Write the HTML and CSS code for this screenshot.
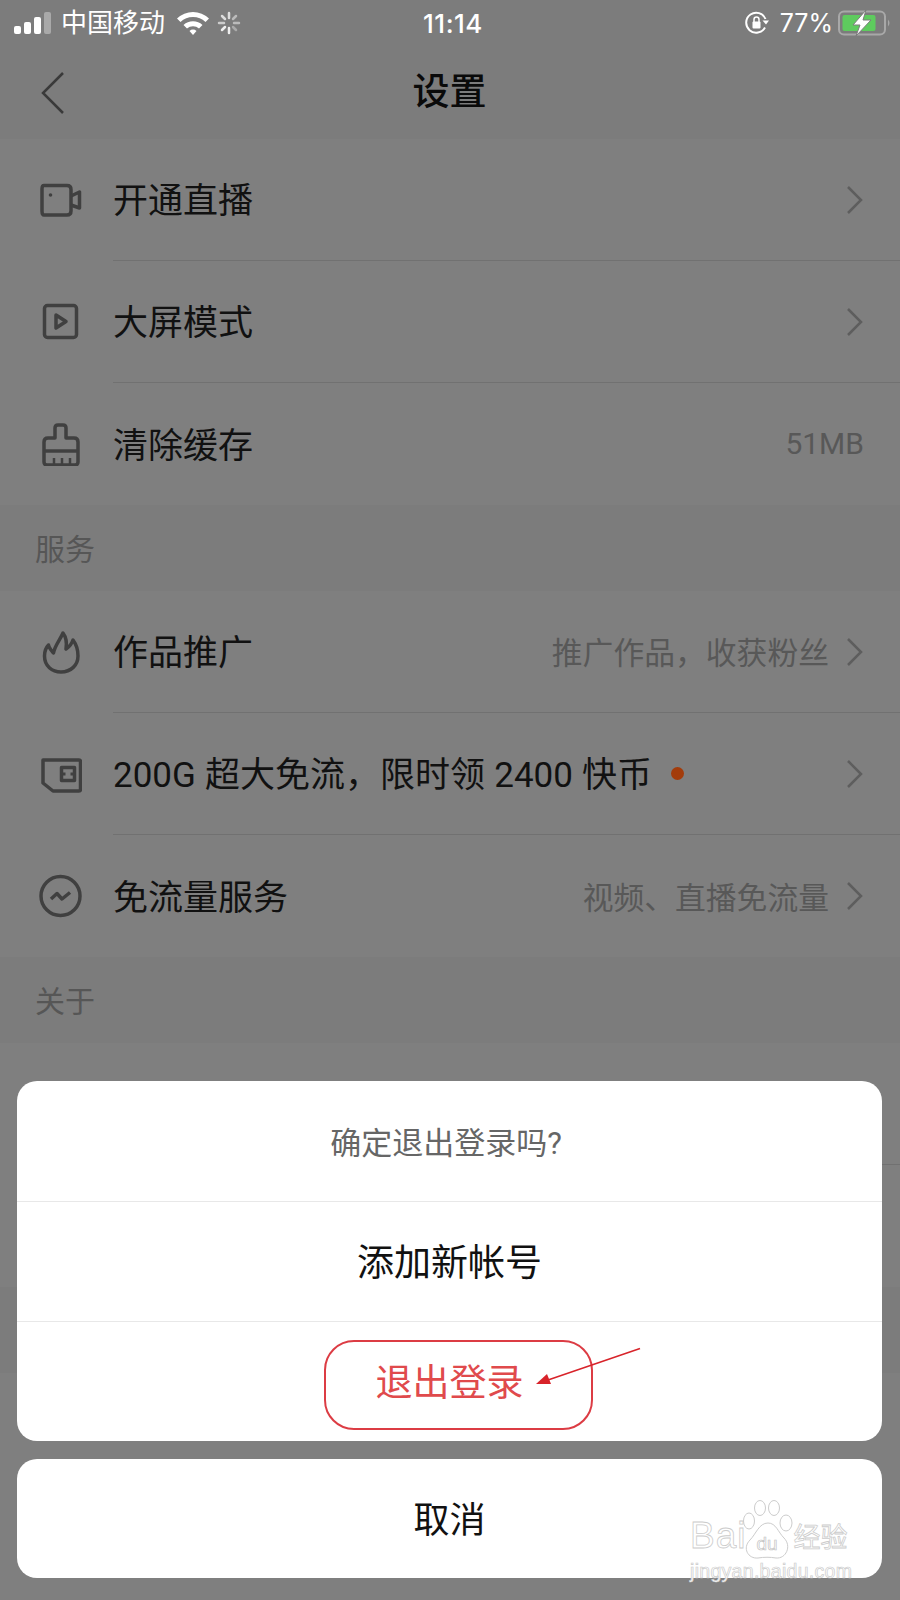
FILE: index.html
```html
<!DOCTYPE html>
<html lang="zh-CN">
<head>
    <meta charset="UTF-8">
    <meta name="viewport" content="width=device-width, initial-scale=1.0">
    <title>设置</title>

    <link rel="stylesheet" href="styles.css">
</head>
<body>

    <div class="page">

        <div class="status_bar">
            <div class="status_left">
                <svg class="signal" width="38" height="24" viewBox="0 0 38 24">
                    <rect x="0" y="15" width="7" height="8" rx="2" fill="#fff"/>
                    <rect x="10" y="11" width="7" height="12" rx="2" fill="#fff"/>
                    <rect x="20" y="6" width="7" height="17" rx="2" fill="#fff"/>
                    <rect x="30" y="1" width="7" height="22" rx="2" fill="#a9a9a9"/>
                </svg>
                <span class="carrier">中国移动</span>
                <svg class="wifi" width="34" height="26" viewBox="0 0 34 26">
                    <path d="M1 8.500 A23 23 0 0 1 33 8.500 L29.500 12 A18 18 0 0 0 4.500 12 Z" fill="#fff"/>
                    <path d="M7.500 15 A14 14 0 0 1 26.500 15 L23 18.500 A9 9 0 0 0 11 18.500 Z" fill="#fff"/>
                    <path d="M13.500 21 A5 5 0 0 1 20.500 21 L17 25 Z" fill="#fff"/>
                </svg>
                <svg class="spinner" width="24" height="24" viewBox="0 0 24 24" stroke-width="2.500" stroke-linecap="round">
                    <path d="M12 2 V7" stroke="#ddd"/>
                    <path d="M19 5 L16 8" stroke="#bbb"/>
                    <path d="M22 12 H17" stroke="#bbb"/>
                    <path d="M19 19 L16 16" stroke="#aaa"/>
                    <path d="M12 22 V17" stroke="#eee"/>
                    <path d="M5 19 L8 16" stroke="#eee"/>
                    <path d="M2 12 H7" stroke="#ccc"/>
                    <path d="M5 5 L8 8" stroke="#ddd"/>
                </svg>
            </div>
            <div class="status_time">11:14</div>
            <div class="status_right">
                <svg class="rotate_lock" width="24" height="24" viewBox="0 0 24 24">
                    <path d="M20 16.500 A10 10 0 1 1 20.500 8" fill="none" stroke="#fff" stroke-width="2"/>
                    <path d="M17.500 9.500 L24 9.500 L21 13.500 Z" fill="#fff"/>
                    <rect x="7.500" y="10.500" width="8" height="7" rx="1" fill="#fff"/>
                    <path d="M9 11 V8.500 A2.500 2.500 0 0 1 14 8.500 V11" fill="none" stroke="#fff" stroke-width="1.500"/>
                </svg>
                <span class="battery_text">77%</span>
                <svg class="battery" width="54" height="26" viewBox="0 0 54 26">
                    <rect x="1" y="1.500" width="46" height="23" rx="5" fill="none" stroke="#a8a8a8" stroke-width="2"/>
                    <rect x="4.500" y="5" width="33" height="16" rx="2" fill="#5ecb5e"/>
                    <path d="M50 9.500 Q53 13 50 16.500 Z" fill="#a8a8a8"/>
                    <path d="M28 0 L15 15 H22 L18 26 L33 10 H25 Z" fill="#fff" stroke="#7c7c7c" stroke-width="1"/>
                </svg>
            </div>
        </div>

        <div class="nav_bar">
            <svg class="nav_back" width="24" height="44" viewBox="0 0 24 44">
                <path d="M22 2 L2 22 L22 42" fill="none" stroke="#3a3a3a" stroke-width="2.500"/>
            </svg>
            <div class="nav_title">设置</div>
        </div>

        <div class="row">
            <svg class="row_icon" width="44" height="44" viewBox="0 0 44 44" fill="none" stroke="#404040" stroke-width="3.500" stroke-linejoin="round">
                <path d="M6 7.500 H29 Q33 7.500 33 11.500 V33 Q33 37 29 37 H6 Q4 37 4 33 V11 Q4 7.500 6 7.500 Z"/>
                <path d="M33 18 L41.500 14 V30 L33 27"/>
                <circle cx="12.500" cy="17" r="1.800" fill="#404040" stroke="none"/>
            </svg>
            <div class="row_body">
                <span class="row_text">开通直播</span>
                <svg class="chevron chevron_end" width="18" height="30" viewBox="0 0 18 30"><path d="M2 2 L15 15 L2 28"/></svg>
            </div>
        </div>
        <div class="row">
            <svg class="row_icon" width="44" height="44" viewBox="0 0 44 44" fill="none" stroke="#404040" stroke-width="3.500">
                <rect x="6.500" y="5.500" width="32" height="32" rx="3"/>
                <path d="M18 15 L28 21.500 L18 28 Z" stroke-linejoin="round"/>
            </svg>
            <div class="row_body">
                <span class="row_text">大屏模式</span>
                <svg class="chevron chevron_end" width="18" height="30" viewBox="0 0 18 30"><path d="M2 2 L15 15 L2 28"/></svg>
            </div>
        </div>
        <div class="row no_line">
            <svg class="row_icon" width="44" height="44" viewBox="0 0 44 44" fill="none" stroke="#404040" stroke-width="3.500" stroke-linejoin="round">
                <path d="M17 16 V6 Q17 3 20 3 H25 Q28 3 28 6 V16 H36 Q40 16 40 20 V40 Q40 43 37 43 H9 Q6 43 6 40 V20 Q6 16 10 16 Z"/>
                <path d="M6 29 H40"/>
                <path d="M16 36 V43 M24 36 V43 M32 36 V43" stroke-width="2.500"/>
            </svg>
            <div class="row_body">
                <span class="row_text">清除缓存</span>
                <span class="row_value row_value_end">51MB</span>
            </div>
        </div>

        <div class="section_title">服务</div>

        <div class="row">
            <svg class="row_icon" width="44" height="44" viewBox="0 0 44 44" fill="none" stroke="#404040" stroke-width="3.500" stroke-linejoin="round">
                <path d="M25 3 C22 10 17 15 15.500 23 C13 20 11 18 10.500 15 C7.500 18 6.500 22 6.500 26 C6.500 36 14 42 23 42 C33 42 40 35 40 26 C40 20 38 14 35 10 C34 13 31 17 28 19 C29 13 28 7 25 3 Z"/>
            </svg>
            <div class="row_body">
                <span class="row_text">作品推广</span>
                <span class="row_value">推广作品，收获粉丝</span>
                <svg class="chevron" width="18" height="30" viewBox="0 0 18 30"><path d="M2 2 L15 15 L2 28"/></svg>
            </div>
        </div>
        <div class="row">
            <svg class="row_icon" width="44" height="44" viewBox="0 0 44 44" fill="none" stroke="#404040" stroke-width="3.500" stroke-linejoin="round">
                <path d="M5 8 H41 Q42.500 8 42.500 9.500 V37.500 Q42.500 39 41 39 H15 L5 31 Z"/>
                <rect x="23.500" y="15.500" width="13" height="13"/>
                <path d="M24 22 H27.500 M32.500 22 H36" stroke-width="3"/>
            </svg>
            <div class="row_body">
                <span class="row_text row_text_mix">200G 超大免流，限时领 2400 快币</span>
                <span class="red_dot"></span>
                <svg class="chevron chevron_end" width="18" height="30" viewBox="0 0 18 30"><path d="M2 2 L15 15 L2 28"/></svg>
            </div>
        </div>
        <div class="row no_line">
            <svg class="row_icon" width="44" height="44" viewBox="0 0 44 44" fill="none" stroke="#404040" stroke-width="3.500">
                <circle cx="22.500" cy="22" r="19.500"/>
                <path d="M13 25 L19 19.500 L24 25 L32 18.500" stroke-linejoin="round"/>
            </svg>
            <div class="row_body">
                <span class="row_text">免流量服务</span>
                <span class="row_value">视频、直播免流量</span>
                <svg class="chevron" width="18" height="30" viewBox="0 0 18 30"><path d="M2 2 L15 15 L2 28"/></svg>
            </div>
        </div>

        <div class="section_title">关于</div>

        <div class="row"><div class="row_body"></div></div>
        <div class="row no_line"><div class="row_body"></div></div>
        <div class="section_title"></div>

        <!-- action sheet over the dimmed page -->
        <div class="sheet_wrap">
            <div class="sheet">
                <div class="sheet_title">确定退出登录吗?</div>
                <div class="sheet_item">添加新帐号</div>
                <div class="sheet_item sheet_item_red">退出登录</div>
                <div class="mark_box"></div>
                <svg class="mark_arrow" width="110" height="42" viewBox="0 0 110 42">
                    <path d="M106 1.500 L14 33" stroke="#d8232a" stroke-width="1.500" fill="none"/>
                    <path d="M2 37 L13 27 L17 37 Z" fill="#d8232a"/>
                </svg>
            </div>
            <div class="sheet_cancel">取消</div>
        </div>

        <!-- watermark -->
        <div class="watermark">
            <div class="watermark_top">
                <span class="watermark_word">Bai</span>
                <svg class="watermark_paw" width="52" height="62" viewBox="0 0 52 62">
                    <g fill="#fff" stroke="#cccccc" stroke-width="1">
                        <ellipse cx="7" cy="21" rx="5.500" ry="8"/>
                        <ellipse cx="18" cy="8" rx="5.500" ry="7.500"/>
                        <ellipse cx="32" cy="8" rx="5.500" ry="7.500"/>
                        <ellipse cx="44" cy="23" rx="6" ry="8"/>
                        <path d="M26 23 C34 23 36 32 42 38 C50 46 44 59 34 58 C28 57 22 57 16 58 C6 59 0 48 8 40 C14 34 17 23 26 23 Z"/>
                    </g>
                    <text x="25" y="50" class="watermark_du">du</text>
                </svg>
                <span class="watermark_cn">经验</span>
            </div>
            <div class="watermark_url">jingyan.baidu.com</div>
        </div>

    </div>

</body>
</html>
```

FILE: styles.css
```css
*,*::after,*::before{
    box-sizing: border-box;
    margin: 0;
    padding: 0;
}

html, body{
    width: 900px;
    height: 1600px;
    overflow: hidden;
}

body{
    background-color: #7f7f7f;
    font-family: "Roboto", "Noto Sans CJK SC", sans-serif;
    color: #111;
}

.page{
    position: relative;
    width: 900px;
    height: 1600px;
}

/* status bar */

.status_bar{
    display: grid;
    grid-template-columns: 1fr auto 1fr;
    align-items: center;
    height: 46px;
    padding: 0 8px 0 14px;
    background-color: #7c7c7c;
    color: #fff;
}

.status_left{
    display: flex;
    align-items: center;
}

.carrier{
    margin-left: 9px;
    font-size: 26px;
    line-height: 46px;
}

.wifi{
    margin-left: 11px;
}

.spinner{
    margin-left: 7px;
}

.status_time{
    font-family: "Inter", sans-serif;
    font-size: 26px;
    font-weight: 500;
    letter-spacing: 0.5px;
}

.status_right{
    display: flex;
    align-items: center;
    justify-content: flex-end;
}

.battery_text{
    margin: 0 5px 0 11px;
    font-family: "Inter", sans-serif;
    font-size: 25px;
}

/* nav */

.nav_bar{
    display: grid;
    grid-template-columns: 1fr auto 1fr;
    align-items: center;
    height: 93px;
    padding-left: 41px;
    background-color: #7c7c7c;
}

.nav_title{
    padding-top: 1px;
    font-size: 37px;
    font-weight: 500;
    color: #0a0a0a;
    line-height: 88px;
    transform: translateX(-21px);
}

/* rows */

.row{
    display: flex;
    align-items: stretch;
    height: 122px;
    padding-left: 38px;
}

.row_icon{
    flex: none;
    align-self: center;
}

.row_body{
    display: flex;
    flex: 1;
    align-items: center;
    margin-left: 31px;
    padding-right: 36px;
    border-bottom: 1px solid #717171;
}

.no_line .row_body{
    border-bottom: none;
}

.row_text{
    padding-bottom: 4px;
    font-size: 35px;
    color: #111;
    white-space: nowrap;
}

.row_text_mix{
    word-spacing: 0.5px;
}

.row_value{
    margin-left: auto;
    margin-right: 17px;
    padding-bottom: 2px;
    font-size: 30.8px;
    color: #585858;
    white-space: nowrap;
}

.row_value_end{
    margin-right: 0;
    font-size: 30px;
}

.chevron{
    flex: none;
    fill: none;
    stroke: #5e5e5e;
    stroke-width: 2.5;
}

.chevron_end{
    margin-left: auto;
}

.red_dot{
    flex: none;
    width: 13px;
    height: 13px;
    margin-left: 19px;
    border-radius: 50%;
    background-color: #a33c0b;
}

.section_title{
    display: flex;
    align-items: center;
    height: 86px;
    padding: 0 0 3px 35px;
    background-color: #7c7c7c;
    font-size: 30px;
    color: #565656;
}

/* action sheet */

.sheet_wrap{
    position: absolute;
    top: 1081px;
    left: 17px;
    width: 865px;
    display: flex;
    flex-direction: column;
    gap: 18px;
}

.sheet{
    position: relative;
    border-radius: 20px;
    background-color: #fff;
}

.sheet_title{
    display: flex;
    align-items: center;
    justify-content: center;
    height: 120px;
    padding: 0 7px 2px 0;
    font-size: 31px;
    color: #666;
}

.sheet_item{
    display: flex;
    align-items: center;
    justify-content: center;
    height: 120px;
    padding-bottom: 4px;
    border-top: 1px solid #e8e8e8;
    font-size: 37px;
    color: #111;
}

.sheet_item_red{
    color: #e04a4c;
}

.mark_box{
    position: absolute;
    top: 259px;
    left: 307px;
    width: 269px;
    height: 90px;
    border: 2px solid #dc3c44;
    border-radius: 30px;
}

.mark_arrow{
    position: absolute;
    top: 266px;
    left: 517px;
}

.sheet_cancel{
    display: flex;
    align-items: center;
    justify-content: center;
    height: 119px;
    padding-bottom: 4px;
    border-radius: 20px;
    background-color: #fff;
    font-size: 36px;
    color: #111;
}

/* watermark */

.watermark{
    position: absolute;
    top: 1500px;
    left: 690px;
    width: 170px;
    color: #fff;
}

.watermark_top{
    display: flex;
    align-items: flex-end;
    height: 58px;
}

.watermark_word{
    font-family: "Liberation Sans", sans-serif;
    font-size: 37px;
    line-height: 44px;
    letter-spacing: 1px;
    -webkit-text-stroke: 0.8px #cccccc;
}

.watermark_paw{
    flex: none;
    margin: 0 0 -4px -4px;
}

.watermark_du{
    font-family: "Liberation Sans", sans-serif;
    font-size: 19px;
    text-anchor: middle;
    fill: #fff;
    stroke: #c4c4c4;
    stroke-width: 0.7px;
}

.watermark_cn{
    margin-left: -1px;
    font-family: "Noto Sans CJK SC", sans-serif;
    font-size: 27px;
    line-height: 44px;
    white-space: nowrap;
    -webkit-text-stroke: 0.8px #cccccc;
}

.watermark_url{
    font-family: "Liberation Sans", sans-serif;
    font-size: 19.5px;
    line-height: 26px;
    letter-spacing: 0.3px;
    white-space: nowrap;
    -webkit-text-stroke: 0.7px #cccccc;
}
```
